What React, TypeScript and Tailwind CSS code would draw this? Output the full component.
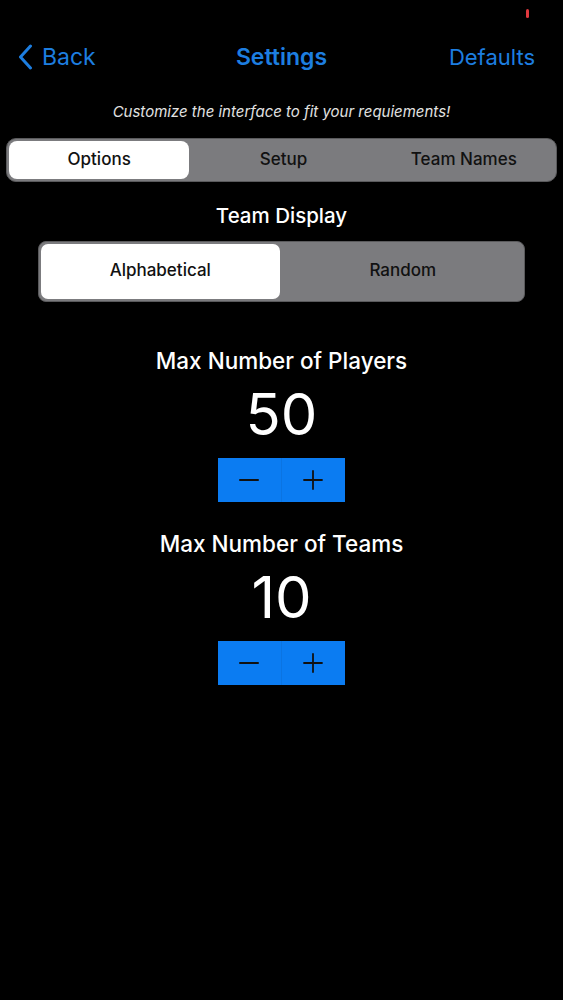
import { useState } from "react";

const font = { fontFamily: "Inter, 'Noto Sans', sans-serif" };

function Segmented({
  items,
  selected,
  onSelect,
  className,
  itemClass,
}: {
  items: string[];
  selected: number;
  onSelect: (i: number) => void;
  className: string;
  itemClass: string;
}) {
  return (
    <div className={`flex bg-[#7b7b7e] border border-[#5a5a5c] p-[2px] ${className}`}>
      {items.map((label, i) => (
        <button
          key={label}
          onClick={() => onSelect(i)}
          className={`flex-1 flex items-center justify-center text-[#111] font-medium ${itemClass} ${
            i === selected ? "bg-white mr-[4px]" : ""
          }`}
        >
          {label}
        </button>
      ))}
    </div>
  );
}

function Stepper({ label, value, onChange }: { label: string; value: number; onChange: (v: number) => void }) {
  return (
    <div className="flex flex-col items-center">
      <div className="text-white text-[22.5px] font-medium leading-[28px]">{label}</div>
      <div className="text-white text-[58px] leading-[64px] mt-[7px]">{value}</div>
      <div className="flex w-[127px] h-[44px] bg-[#0b7cf2] mt-[12px]">
        <button onClick={() => onChange(value - 1)} className="flex-1 flex items-center justify-center border-r border-[#0b74e2]">
          <svg width="20" height="20" viewBox="0 0 20 20">
            <path d="M1 10h18" stroke="#111" strokeWidth="2" strokeLinecap="round" />
          </svg>
        </button>
        <button onClick={() => onChange(value + 1)} className="flex-1 flex items-center justify-center">
          <svg width="20" height="20" viewBox="0 0 20 20">
            <path d="M1 10h18M10 1v18" stroke="#111" strokeWidth="1.8" strokeLinecap="round" />
          </svg>
        </button>
      </div>
    </div>
  );
}

export default function App() {
  const [tab, setTab] = useState(0);
  const [display, setDisplay] = useState(0);
  const [players, setPlayers] = useState(50);
  const [teams, setTeams] = useState(10);

  return (
    <div className="bg-black min-h-[1000px] w-full relative" style={font}>
      {/* status dot */}
      <div className="absolute left-[526px] top-[9px] w-[3px] h-[9px] rounded-full bg-[#e0383e]" />

      {/* NAV */}
      <div className="grid grid-cols-3 items-center px-[18px] pt-[40px] h-[72px]">
        <button className="flex items-center gap-[9px] text-[#1d7ee0] text-[23px] justify-self-start">
          <svg width="15" height="26" viewBox="0 0 15 26">
            <path d="M12.5 2L2.5 13l10 11" fill="none" stroke="#1d7ee0" strokeWidth="3" strokeLinecap="round" strokeLinejoin="round" />
          </svg>
          <span>Back</span>
        </button>
        <div className="text-[#1d7ee0] text-[23px] font-semibold text-center">Settings</div>
        <button className="text-[#1d7ee0] text-[22px] mr-[10px] justify-self-end">Defaults</button>
      </div>

      <p className="text-center text-[#e2e2e2] italic text-[15px] mt-[29px]">
        Customize the interface to fit your requiements!
      </p>

      <div className="px-[6px] mt-[14px]">
        <Segmented
          items={["Options", "Setup", "Team Names"]}
          selected={tab}
          onSelect={setTab}
          className="h-[44px] rounded-[10px]"
          itemClass="text-[17px] rounded-[8px]"
        />
      </div>

      <div className="text-center text-white text-[20.5px] font-medium mt-[20px] leading-[28px]">Team Display</div>

      <div className="px-[38px] mt-[11px]">
        <Segmented
          items={["Alphabetical", "Random"]}
          selected={display}
          onSelect={setDisplay}
          className="h-[61px] rounded-[8px]"
          itemClass="text-[17px] rounded-[7px]"
        />
      </div>

      <div className="mt-[45px] flex flex-col items-center gap-[28px]">
        <Stepper label="Max Number of Players" value={players} onChange={setPlayers} />
        <Stepper label="Max Number of Teams" value={teams} onChange={setTeams} />
      </div>
    </div>
  );
}
